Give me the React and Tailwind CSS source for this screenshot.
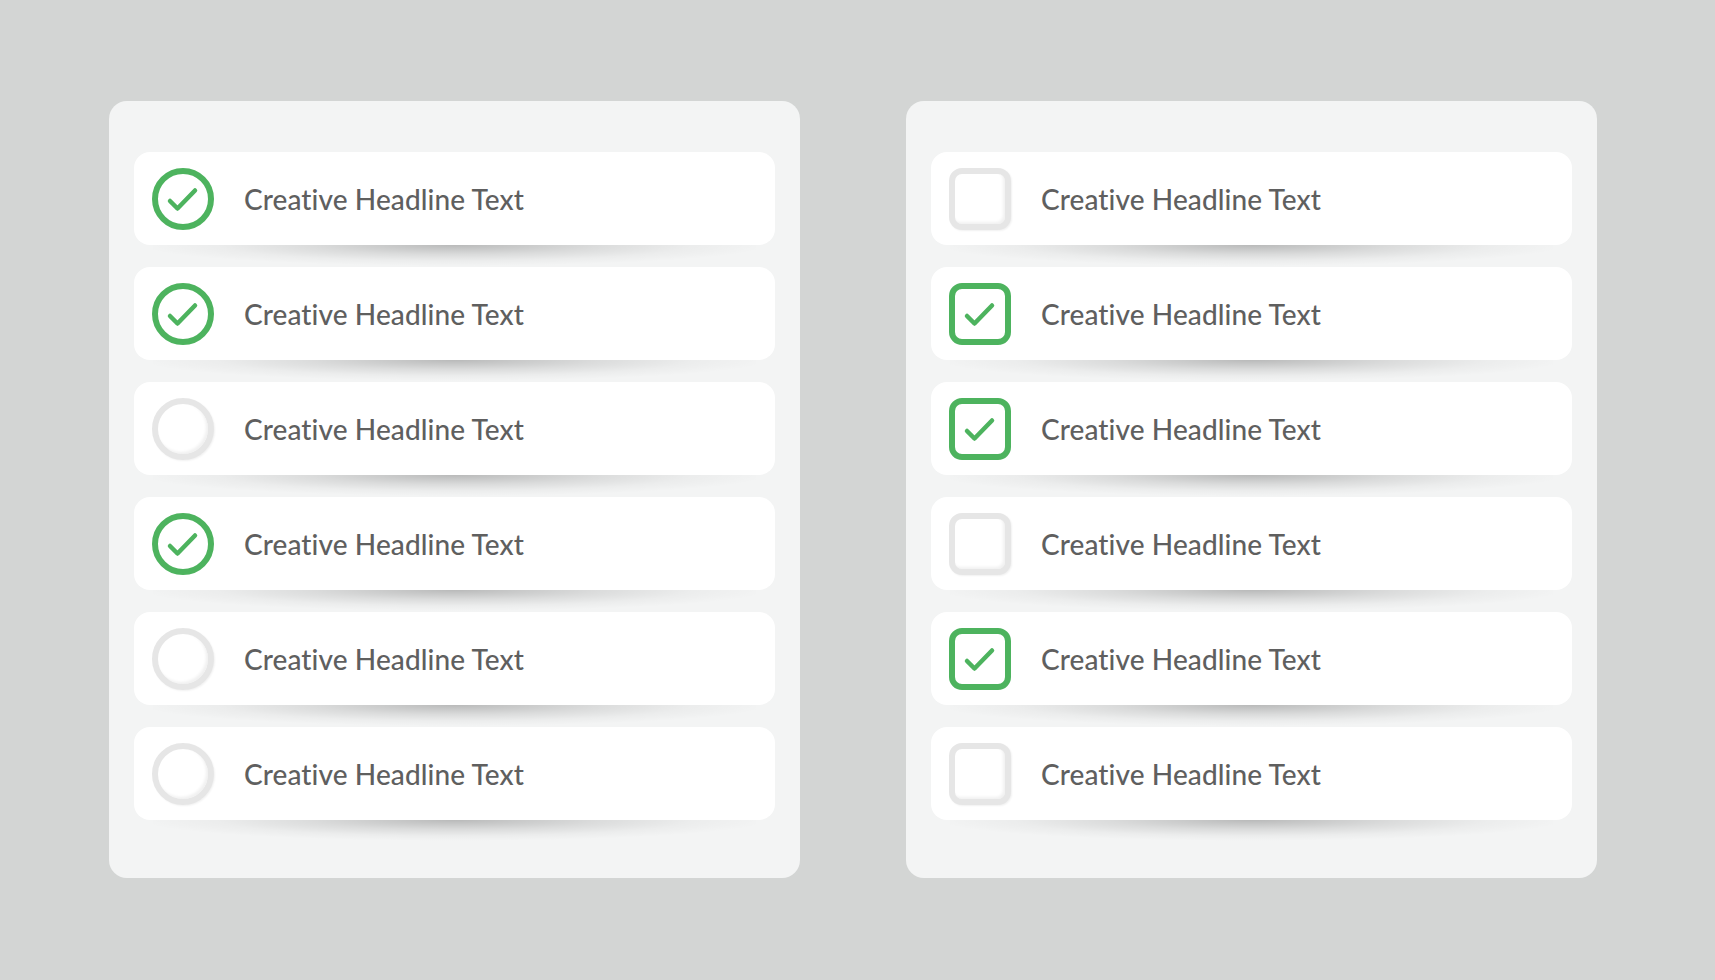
import { Fragment } from "react";

const left = [true, true, false, true, false, false];
const right = [false, true, true, false, true, false];

function Check() {
  return (
    <path
      d="M18 33 L25.5 40.5 L43 22.5"
      fill="none"
      stroke="#4db35e"
      strokeWidth="4.5"
      strokeLinecap="round"
      strokeLinejoin="round"
    />
  );
}

function RoundMark({ on }) {
  if (on) {
    return (
      <svg width="62" height="62" viewBox="0 0 62 62" className="shrink-0">
        <circle cx="31" cy="31" r="28" fill="none" stroke="#4db35e" strokeWidth="6" />
        <Check />
      </svg>
    );
  }
  return (
    <div className="w-[62px] h-[62px] shrink-0 rounded-full border-[6px] border-[#e6e6e6] bg-white shadow-[inset_-2px_-2px_3px_rgba(0,0,0,0.06),1px_1px_2px_rgba(0,0,0,0.06)]" />
  );
}

function SquareMark({ on }) {
  if (on) {
    return (
      <svg width="62" height="62" viewBox="0 0 62 62" className="shrink-0">
        <rect x="3" y="3" width="56" height="56" rx="10" fill="none" stroke="#4db35e" strokeWidth="6" />
        <Check />
      </svg>
    );
  }
  return (
    <div className="w-[62px] h-[62px] shrink-0 rounded-[13px] border-[6px] border-[#e6e6e6] bg-white shadow-[inset_-2px_-2px_3px_rgba(0,0,0,0.06),1px_1px_2px_rgba(0,0,0,0.06)]" />
  );
}

function Panel({ items, square }) {
  return (
    <div className="w-[691px] h-[777px] rounded-[18px] bg-[#f3f4f4] px-[25px] pt-[51px]">
      {items.map((on, i) => (
        <Fragment key={i}>
          <div className="h-[93px] rounded-[16px] bg-white flex items-center pl-[18px]">
            {square ? <SquareMark on={on} /> : <RoundMark on={on} />}
            <span className="ml-[30px] text-[28px] font-medium text-[#5f5f5f] font-['Lato','Open_Sans',sans-serif] tracking-[0.1px]">
              Creative Headline Text
            </span>
          </div>
          <div className="h-[22px] flex justify-center">
            <div className="w-[94%] h-[21px] rounded-b-[50%] bg-[radial-gradient(ellipse_52%_100%_at_50%_0%,rgba(0,0,0,0.24),rgba(0,0,0,0.1)_45%,rgba(0,0,0,0.03)_75%,transparent_100%)]" />
          </div>
        </Fragment>
      ))}
    </div>
  );
}

export default function App() {
  return (
    <div className="w-[1715px] h-[980px] bg-[#d3d5d4] flex gap-[106px] pl-[109px] pt-[101px]">
      <Panel items={left} />
      <Panel items={right} square />
    </div>
  );
}
